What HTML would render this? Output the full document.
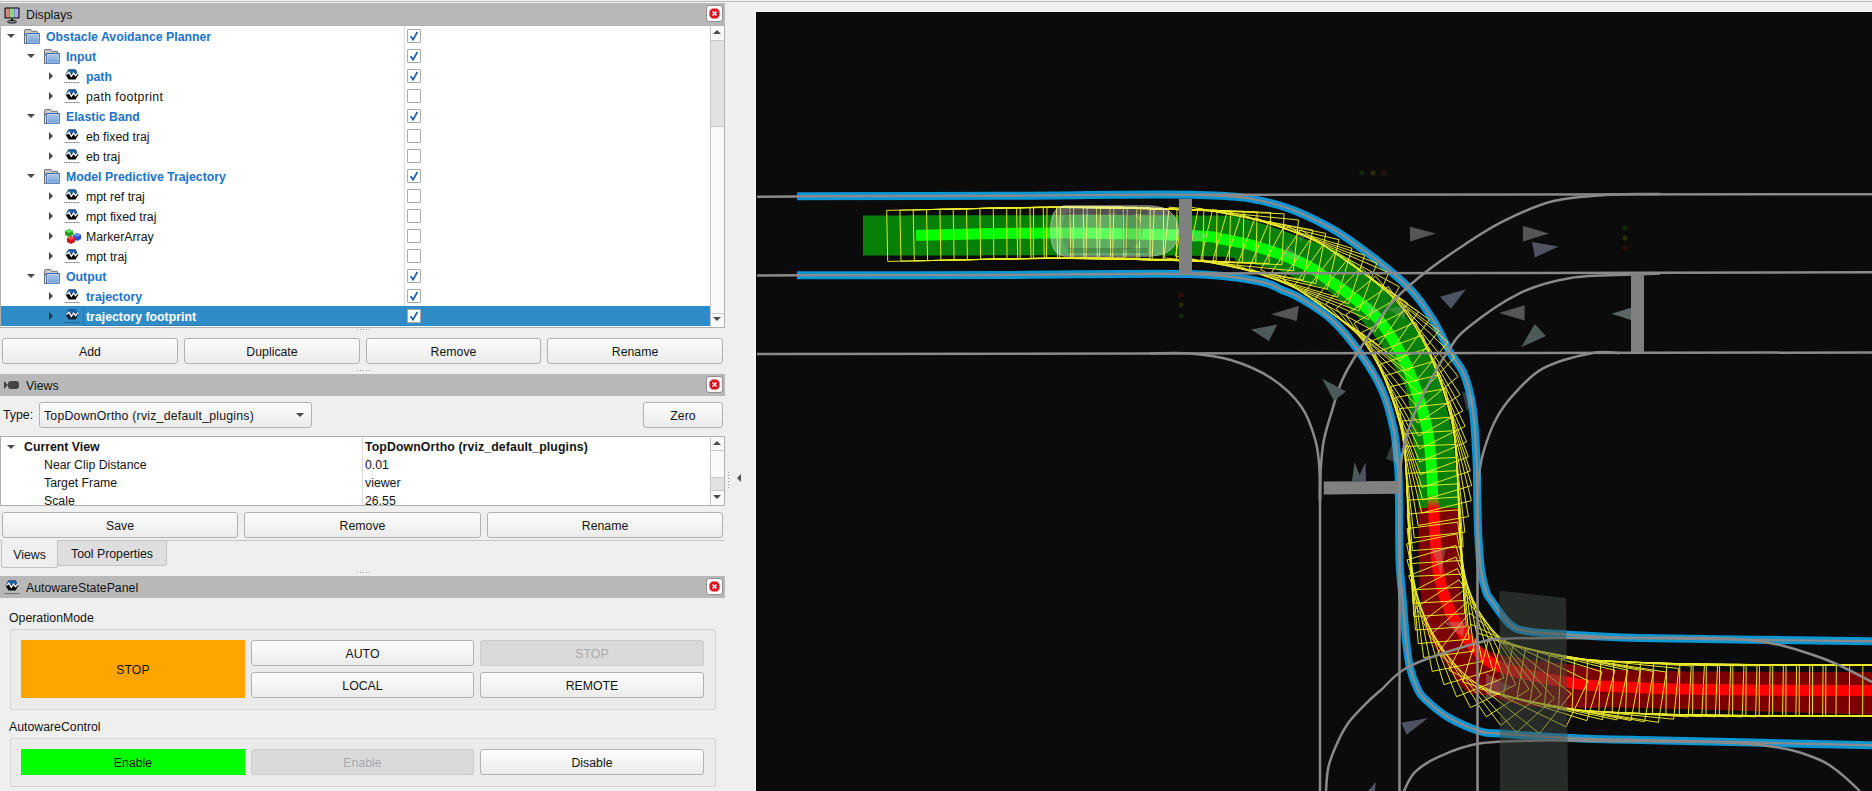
<!DOCTYPE html><html><head><meta charset="utf-8"><style>
*{box-sizing:border-box;margin:0;padding:0}
html,body{width:1872px;height:791px;overflow:hidden;background:#efefef;font-family:"Liberation Sans",sans-serif;font-size:12.3px;color:#141414}
.a{position:absolute;white-space:nowrap;padding-top:1px}
.bar{position:absolute;left:0;width:725px;background:#b8b8b8}
.close{position:absolute;width:17px;height:17px;border:1px solid #909090;border-radius:3px;background:#fbfbfb}
.btn{position:absolute;height:26px;border:1px solid #b2b2b2;border-radius:3px;background:linear-gradient(#fdfdfd,#ebebeb);text-align:center;line-height:24px;color:#141414;white-space:nowrap;padding-top:1px}
.btn.dis{background:#dadada;border-color:#cbcbcb;color:#a9a9a9}
.tree{position:absolute;background:#fff;border:1px solid #b0b0b0}
.row{position:absolute;left:0;width:725px;height:20px;line-height:20px;white-space:nowrap}
.blue{color:#2173c9;font-weight:bold}
.td{position:absolute;width:0;height:0;border-left:4px solid transparent;border-right:4px solid transparent;border-top:4px solid #4a4a4a}
.tr{position:absolute;width:0;height:0;border-top:4px solid transparent;border-bottom:4px solid transparent;border-left:4.5px solid #4a4a4a}
.cb{position:absolute;width:14px;height:14px;border:1px solid #a8a8a8;border-radius:1px;background:#fff}
svg{position:absolute;overflow:visible}
</style></head><body>
<svg width="0" height="0" style="left:0;top:0"><defs><linearGradient id="fgrad" x1="0" y1="0" x2="0" y2="1"><stop offset="0" stop-color="#a2c2e4"/><stop offset="0.5" stop-color="#96b8df"/><stop offset="1" stop-color="#6f9fd6"/></linearGradient></defs></svg>
<div class="a" style="left:0;top:1px;width:1872px;height:1px;background:#bcbcbc"></div>
<div class="bar" style="top:3px;height:23px"></div>
<svg width="18" height="18" style="left:4px;top:7px"><rect x="0.5" y="0.5" width="15" height="11" rx="1" fill="#000"/><rect x="1.5" y="1.5" width="4.3" height="9" fill="#d98080"/><rect x="5.8" y="1.5" width="4.4" height="9" fill="#8ad68a"/><rect x="10.2" y="1.5" width="4.3" height="9" fill="#a8a8f0"/><rect x="7" y="12" width="2" height="2" fill="#000"/><ellipse cx="8" cy="14.8" rx="4.5" ry="1.2" fill="none" stroke="#000" stroke-width="1"/></svg>
<div class="a" style="left:26px;top:3px;line-height:23px">Displays</div>
<div class="close" style="left:706px;top:5px"><svg width="17" height="17" style="left:-1px;top:-1px"><polygon points="6,3.5 11,3.5 13.5,6 13.5,11 11,13.5 6,13.5 3.5,11 3.5,6" fill="#d7141c"/><path d="M6.5 6.5L10.5 10.5M10.5 6.5L6.5 10.5" stroke="#fff" stroke-width="1.4"/></svg></div>
<div class="tree" style="left:0;top:25px;width:725px;height:303px"></div>
<div class="a" style="left:404px;top:26px;width:1px;height:301px;background:#dcdcdc"></div>
<div class="td" style="left:7px;top:34px"></div>
<svg width="17" height="16" style="left:24px;top:29px"><path d="M0.5 14.5V1.5Q0.5 0.5 1.5 0.5H6.5L8 2.3H12.8Q13.5 2.3 13.5 3V6H0.5Z" fill="#c8c8c8" stroke="#6e6e6e" stroke-width="1"/><path d="M0.5 6V14.5H2" fill="none" stroke="#6e6e6e"/><rect x="1.8" y="3.9" width="14" height="10.8" rx="0.6" fill="#2d60a8"/><rect x="2.8" y="4.9" width="12" height="8.8" fill="#c6daf0"/><rect x="3.6" y="5.7" width="10.4" height="7.2" fill="url(#fgrad)"/></svg>
<div class="a blue" style="left:46px;top:26px;line-height:21px;">Obstacle Avoidance Planner</div>
<div class="cb" style="left:407px;top:29px"><svg width="14" height="14" style="left:-1px;top:-1px"><path d="M3.6 7.2L6 10.6L10.4 3" fill="none" stroke="#1f5ea8" stroke-width="1.7"/></svg></div>
<div class="td" style="left:27px;top:54px"></div>
<svg width="17" height="16" style="left:44px;top:49px"><path d="M0.5 14.5V1.5Q0.5 0.5 1.5 0.5H6.5L8 2.3H12.8Q13.5 2.3 13.5 3V6H0.5Z" fill="#c8c8c8" stroke="#6e6e6e" stroke-width="1"/><path d="M0.5 6V14.5H2" fill="none" stroke="#6e6e6e"/><rect x="1.8" y="3.9" width="14" height="10.8" rx="0.6" fill="#2d60a8"/><rect x="2.8" y="4.9" width="12" height="8.8" fill="#c6daf0"/><rect x="3.6" y="5.7" width="10.4" height="7.2" fill="url(#fgrad)"/></svg>
<div class="a blue" style="left:66px;top:46px;line-height:21px;">Input</div>
<div class="cb" style="left:407px;top:49px"><svg width="14" height="14" style="left:-1px;top:-1px"><path d="M3.6 7.2L6 10.6L10.4 3" fill="none" stroke="#1f5ea8" stroke-width="1.7"/></svg></div>
<div class="tr" style="left:49px;top:72px;border-left-color:#4a4a4a"></div>
<svg width="17" height="16" style="left:64px;top:69px"><polygon points="4.5,0.5 11.5,0.5 14.5,5.5 11.5,10.5 4.5,10.5 1.5,5.5" fill="#000"/><polygon points="4.5,0.5 11.5,0.5 14,4.6 2,4.6" fill="#1d5fa6"/><path d="M2.3 5.6L5 3.3L7.3 7.2L9.6 4L11.6 6.6L14 3.6" fill="none" stroke="#fff" stroke-width="1.3"/><path d="M0.5 14L1.5 12.6M2 13.6H15.5" stroke="#000" stroke-width="0.8" stroke-dasharray="1 0.6" opacity="0.8"/></svg>
<div class="a blue" style="left:86px;top:66px;line-height:21px;">path</div>
<div class="cb" style="left:407px;top:69px"><svg width="14" height="14" style="left:-1px;top:-1px"><path d="M3.6 7.2L6 10.6L10.4 3" fill="none" stroke="#1f5ea8" stroke-width="1.7"/></svg></div>
<div class="tr" style="left:49px;top:92px;border-left-color:#4a4a4a"></div>
<svg width="17" height="16" style="left:64px;top:89px"><polygon points="4.5,0.5 11.5,0.5 14.5,5.5 11.5,10.5 4.5,10.5 1.5,5.5" fill="#000"/><polygon points="4.5,0.5 11.5,0.5 14,4.6 2,4.6" fill="#1d5fa6"/><path d="M2.3 5.6L5 3.3L7.3 7.2L9.6 4L11.6 6.6L14 3.6" fill="none" stroke="#fff" stroke-width="1.3"/><path d="M0.5 14L1.5 12.6M2 13.6H15.5" stroke="#000" stroke-width="0.8" stroke-dasharray="1 0.6" opacity="0.8"/></svg>
<div class="a " style="left:86px;top:86px;line-height:21px;letter-spacing:0.4px;">path footprint</div>
<div class="cb" style="left:407px;top:89px"></div>
<div class="td" style="left:27px;top:114px"></div>
<svg width="17" height="16" style="left:44px;top:109px"><path d="M0.5 14.5V1.5Q0.5 0.5 1.5 0.5H6.5L8 2.3H12.8Q13.5 2.3 13.5 3V6H0.5Z" fill="#c8c8c8" stroke="#6e6e6e" stroke-width="1"/><path d="M0.5 6V14.5H2" fill="none" stroke="#6e6e6e"/><rect x="1.8" y="3.9" width="14" height="10.8" rx="0.6" fill="#2d60a8"/><rect x="2.8" y="4.9" width="12" height="8.8" fill="#c6daf0"/><rect x="3.6" y="5.7" width="10.4" height="7.2" fill="url(#fgrad)"/></svg>
<div class="a blue" style="left:66px;top:106px;line-height:21px;">Elastic Band</div>
<div class="cb" style="left:407px;top:109px"><svg width="14" height="14" style="left:-1px;top:-1px"><path d="M3.6 7.2L6 10.6L10.4 3" fill="none" stroke="#1f5ea8" stroke-width="1.7"/></svg></div>
<div class="tr" style="left:49px;top:132px;border-left-color:#4a4a4a"></div>
<svg width="17" height="16" style="left:64px;top:129px"><polygon points="4.5,0.5 11.5,0.5 14.5,5.5 11.5,10.5 4.5,10.5 1.5,5.5" fill="#000"/><polygon points="4.5,0.5 11.5,0.5 14,4.6 2,4.6" fill="#1d5fa6"/><path d="M2.3 5.6L5 3.3L7.3 7.2L9.6 4L11.6 6.6L14 3.6" fill="none" stroke="#fff" stroke-width="1.3"/><path d="M0.5 14L1.5 12.6M2 13.6H15.5" stroke="#000" stroke-width="0.8" stroke-dasharray="1 0.6" opacity="0.8"/></svg>
<div class="a " style="left:86px;top:126px;line-height:21px;">eb fixed traj</div>
<div class="cb" style="left:407px;top:129px"></div>
<div class="tr" style="left:49px;top:152px;border-left-color:#4a4a4a"></div>
<svg width="17" height="16" style="left:64px;top:149px"><polygon points="4.5,0.5 11.5,0.5 14.5,5.5 11.5,10.5 4.5,10.5 1.5,5.5" fill="#000"/><polygon points="4.5,0.5 11.5,0.5 14,4.6 2,4.6" fill="#1d5fa6"/><path d="M2.3 5.6L5 3.3L7.3 7.2L9.6 4L11.6 6.6L14 3.6" fill="none" stroke="#fff" stroke-width="1.3"/><path d="M0.5 14L1.5 12.6M2 13.6H15.5" stroke="#000" stroke-width="0.8" stroke-dasharray="1 0.6" opacity="0.8"/></svg>
<div class="a " style="left:86px;top:146px;line-height:21px;">eb traj</div>
<div class="cb" style="left:407px;top:149px"></div>
<div class="td" style="left:27px;top:174px"></div>
<svg width="17" height="16" style="left:44px;top:169px"><path d="M0.5 14.5V1.5Q0.5 0.5 1.5 0.5H6.5L8 2.3H12.8Q13.5 2.3 13.5 3V6H0.5Z" fill="#c8c8c8" stroke="#6e6e6e" stroke-width="1"/><path d="M0.5 6V14.5H2" fill="none" stroke="#6e6e6e"/><rect x="1.8" y="3.9" width="14" height="10.8" rx="0.6" fill="#2d60a8"/><rect x="2.8" y="4.9" width="12" height="8.8" fill="#c6daf0"/><rect x="3.6" y="5.7" width="10.4" height="7.2" fill="url(#fgrad)"/></svg>
<div class="a blue" style="left:66px;top:166px;line-height:21px;">Model Predictive Trajectory</div>
<div class="cb" style="left:407px;top:169px"><svg width="14" height="14" style="left:-1px;top:-1px"><path d="M3.6 7.2L6 10.6L10.4 3" fill="none" stroke="#1f5ea8" stroke-width="1.7"/></svg></div>
<div class="tr" style="left:49px;top:192px;border-left-color:#4a4a4a"></div>
<svg width="17" height="16" style="left:64px;top:189px"><polygon points="4.5,0.5 11.5,0.5 14.5,5.5 11.5,10.5 4.5,10.5 1.5,5.5" fill="#000"/><polygon points="4.5,0.5 11.5,0.5 14,4.6 2,4.6" fill="#1d5fa6"/><path d="M2.3 5.6L5 3.3L7.3 7.2L9.6 4L11.6 6.6L14 3.6" fill="none" stroke="#fff" stroke-width="1.3"/><path d="M0.5 14L1.5 12.6M2 13.6H15.5" stroke="#000" stroke-width="0.8" stroke-dasharray="1 0.6" opacity="0.8"/></svg>
<div class="a " style="left:86px;top:186px;line-height:21px;">mpt ref traj</div>
<div class="cb" style="left:407px;top:189px"></div>
<div class="tr" style="left:49px;top:212px;border-left-color:#4a4a4a"></div>
<svg width="17" height="16" style="left:64px;top:209px"><polygon points="4.5,0.5 11.5,0.5 14.5,5.5 11.5,10.5 4.5,10.5 1.5,5.5" fill="#000"/><polygon points="4.5,0.5 11.5,0.5 14,4.6 2,4.6" fill="#1d5fa6"/><path d="M2.3 5.6L5 3.3L7.3 7.2L9.6 4L11.6 6.6L14 3.6" fill="none" stroke="#fff" stroke-width="1.3"/><path d="M0.5 14L1.5 12.6M2 13.6H15.5" stroke="#000" stroke-width="0.8" stroke-dasharray="1 0.6" opacity="0.8"/></svg>
<div class="a " style="left:86px;top:206px;line-height:21px;">mpt fixed traj</div>
<div class="cb" style="left:407px;top:209px"></div>
<div class="tr" style="left:49px;top:232px;border-left-color:#4a4a4a"></div>
<svg width="17" height="17" style="left:64px;top:228px"><polygon points="1,3 5,1 9,3 9,7 5,9 1,7" fill="#1fa01f"/><polygon points="1,3 5,1 9,3 5,5" fill="#5fe05f"/><polygon points="9,7 13,5 17,7 17,11 13,13 9,11" fill="#2848d8"/><polygon points="9,7 13,5 17,7 13,9" fill="#6a8af0"/><polygon points="3,10 7,8 11,10 11,14 7,16 3,14" fill="#c81818"/><polygon points="3,10 7,8 11,10 7,12" fill="#f05050"/></svg>
<div class="a " style="left:86px;top:226px;line-height:21px;">MarkerArray</div>
<div class="cb" style="left:407px;top:229px"></div>
<div class="tr" style="left:49px;top:252px;border-left-color:#4a4a4a"></div>
<svg width="17" height="16" style="left:64px;top:249px"><polygon points="4.5,0.5 11.5,0.5 14.5,5.5 11.5,10.5 4.5,10.5 1.5,5.5" fill="#000"/><polygon points="4.5,0.5 11.5,0.5 14,4.6 2,4.6" fill="#1d5fa6"/><path d="M2.3 5.6L5 3.3L7.3 7.2L9.6 4L11.6 6.6L14 3.6" fill="none" stroke="#fff" stroke-width="1.3"/><path d="M0.5 14L1.5 12.6M2 13.6H15.5" stroke="#000" stroke-width="0.8" stroke-dasharray="1 0.6" opacity="0.8"/></svg>
<div class="a " style="left:86px;top:246px;line-height:21px;">mpt traj</div>
<div class="cb" style="left:407px;top:249px"></div>
<div class="td" style="left:27px;top:274px"></div>
<svg width="17" height="16" style="left:44px;top:269px"><path d="M0.5 14.5V1.5Q0.5 0.5 1.5 0.5H6.5L8 2.3H12.8Q13.5 2.3 13.5 3V6H0.5Z" fill="#c8c8c8" stroke="#6e6e6e" stroke-width="1"/><path d="M0.5 6V14.5H2" fill="none" stroke="#6e6e6e"/><rect x="1.8" y="3.9" width="14" height="10.8" rx="0.6" fill="#2d60a8"/><rect x="2.8" y="4.9" width="12" height="8.8" fill="#c6daf0"/><rect x="3.6" y="5.7" width="10.4" height="7.2" fill="url(#fgrad)"/></svg>
<div class="a blue" style="left:66px;top:266px;line-height:21px;">Output</div>
<div class="cb" style="left:407px;top:269px"><svg width="14" height="14" style="left:-1px;top:-1px"><path d="M3.6 7.2L6 10.6L10.4 3" fill="none" stroke="#1f5ea8" stroke-width="1.7"/></svg></div>
<div class="tr" style="left:49px;top:292px;border-left-color:#4a4a4a"></div>
<svg width="17" height="16" style="left:64px;top:289px"><polygon points="4.5,0.5 11.5,0.5 14.5,5.5 11.5,10.5 4.5,10.5 1.5,5.5" fill="#000"/><polygon points="4.5,0.5 11.5,0.5 14,4.6 2,4.6" fill="#1d5fa6"/><path d="M2.3 5.6L5 3.3L7.3 7.2L9.6 4L11.6 6.6L14 3.6" fill="none" stroke="#fff" stroke-width="1.3"/><path d="M0.5 14L1.5 12.6M2 13.6H15.5" stroke="#000" stroke-width="0.8" stroke-dasharray="1 0.6" opacity="0.8"/></svg>
<div class="a blue" style="left:86px;top:286px;line-height:21px;">trajectory</div>
<div class="cb" style="left:407px;top:289px"><svg width="14" height="14" style="left:-1px;top:-1px"><path d="M3.6 7.2L6 10.6L10.4 3" fill="none" stroke="#1f5ea8" stroke-width="1.7"/></svg></div>
<div class="a" style="left:1px;top:306px;width:709px;height:20px;background:#308cc6"></div>
<div class="a" style="left:83px;top:306px;width:1px;height:20px;background:#2674a8"></div>
<div class="a" style="left:83px;top:325px;width:321px;height:1px;background:#2a80b8"></div>
<div class="tr" style="left:49px;top:312px;border-left-color:#1a3550"></div>
<svg width="17" height="16" style="left:64px;top:309px"><polygon points="4.5,0.5 11.5,0.5 14.5,5.5 11.5,10.5 4.5,10.5 1.5,5.5" fill="#0d2238"/><polygon points="4.5,0.5 11.5,0.5 14,4.6 2,4.6" fill="#1d5fa6"/><path d="M2.3 5.6L5 3.3L7.3 7.2L9.6 4L11.6 6.6L14 3.6" fill="none" stroke="#fff" stroke-width="1.3"/><path d="M0.5 14L1.5 12.6M2 13.6H15.5" stroke="#0d2238" stroke-width="0.8" stroke-dasharray="1 0.6" opacity="0.8"/></svg>
<div class="a blue" style="left:86px;top:306px;line-height:21px;color:#fff;">trajectory footprint</div>
<div class="cb" style="left:407px;top:309px"><svg width="14" height="14" style="left:-1px;top:-1px"><path d="M3.6 7.2L6 10.6L10.4 3" fill="none" stroke="#1f5ea8" stroke-width="1.7"/></svg></div>
<div class="a" style="left:710px;top:26px;width:14px;height:301px;background:#fafafa;border-left:1px solid #c8c8c8"></div>
<div class="a" style="left:711px;top:40px;width:13px;height:87px;background:#e2e2e2;border-top:1px solid #c8c8c8;border-bottom:1px solid #c8c8c8"></div>
<div class="a" style="left:711px;top:313px;width:13px;height:1px;background:#c8c8c8"></div>
<div class="td" style="left:713px;top:30px;border-top:none;border-bottom:4px solid #4a4a4a"></div>
<div class="td" style="left:713px;top:317px"></div>
<div class="btn" style="left:2px;top:338px;width:176px">Add</div>
<div class="btn" style="left:184px;top:338px;width:176px">Duplicate</div>
<div class="btn" style="left:366px;top:338px;width:175px">Remove</div>
<div class="btn" style="left:547px;top:338px;width:176px">Rename</div>
<div class="bar" style="top:374px;height:22px"></div>
<svg width="18" height="12" style="left:4px;top:380px"><polygon points="0,1 4,5 0,9" fill="#444"/><rect x="4" y="1" width="11" height="8" rx="3" fill="#444"/></svg>
<div class="a" style="left:26px;top:374px;line-height:22px">Views</div>
<div class="close" style="left:706px;top:376px"><svg width="17" height="17" style="left:-1px;top:-1px"><polygon points="6,3.5 11,3.5 13.5,6 13.5,11 11,13.5 6,13.5 3.5,11 3.5,6" fill="#d7141c"/><path d="M6.5 6.5L10.5 10.5M10.5 6.5L6.5 10.5" stroke="#fff" stroke-width="1.4"/></svg></div>
<div class="a" style="left:3px;top:402px;line-height:25px">Type:</div>
<div class="btn" style="left:39px;top:402px;width:273px;height:26px;text-align:left;padding-left:4px;letter-spacing:0.22px">TopDownOrtho (rviz_default_plugins)</div>
<div class="td" style="left:296px;top:413px"></div>
<div class="btn" style="left:643px;top:402px;width:80px">Zero</div>
<div class="tree" style="left:0;top:436px;width:725px;height:70px"></div>
<div class="a" style="left:362px;top:437px;width:1px;height:68px;background:#dcdcdc"></div>
<div class="td" style="left:7px;top:445px"></div>
<div class="a" style="left:24px;top:437px;line-height:19px;font-weight:bold">Current View</div>
<div class="a" style="left:365px;top:437px;line-height:19px;font-weight:bold;letter-spacing:0.11px">TopDownOrtho (rviz_default_plugins)</div>
<div class="a" style="left:44px;top:455px;line-height:19px">Near Clip Distance</div>
<div class="a" style="left:365px;top:455px;line-height:19px">0.01</div>
<div class="a" style="left:44px;top:473px;line-height:19px">Target Frame</div>
<div class="a" style="left:365px;top:473px;line-height:19px">viewer</div>
<div class="a" style="left:44px;top:491px;line-height:19px">Scale</div>
<div class="a" style="left:365px;top:491px;line-height:19px">26.55</div>
<div class="a" style="left:1px;top:505px;width:723px;height:1px;background:#b0b0b0"></div>
<div class="a" style="left:710px;top:437px;width:14px;height:68px;background:#fafafa;border-left:1px solid #c8c8c8"></div>
<div class="a" style="left:711px;top:450px;width:13px;height:1px;background:#c8c8c8"></div>
<div class="a" style="left:711px;top:477px;width:13px;height:14px;background:#e2e2e2;border-top:1px solid #c8c8c8;border-bottom:1px solid #c8c8c8"></div>
<div class="td" style="left:713px;top:441px;border-top:none;border-bottom:4px solid #4a4a4a"></div>
<div class="td" style="left:713px;top:495px"></div>
<div class="btn" style="left:2px;top:512px;width:236px">Save</div>
<div class="btn" style="left:244px;top:512px;width:237px">Remove</div>
<div class="btn" style="left:487px;top:512px;width:236px">Rename</div>
<div class="a" style="left:0;top:540px;width:725px;height:1px;background:#c4c4c4"></div>
<div class="a" style="left:57px;top:541px;width:110px;height:25px;background:#dedede;border:1px solid #c2c2c2;border-top:none;border-radius:0 0 3px 3px;line-height:24px;text-align:center">Tool Properties</div>
<div class="a" style="left:1px;top:540px;width:57px;height:28px;background:#efefef;border:1px solid #c2c2c2;border-top:none;border-radius:0 0 3px 3px;line-height:29px;text-align:center">Views</div>
<div class="bar" style="top:576px;height:22px"></div>
<svg width="17" height="16" style="left:4px;top:580px"><polygon points="4.5,0.5 11.5,0.5 14.5,5.5 11.5,10.5 4.5,10.5 1.5,5.5" fill="#000"/><polygon points="4.5,0.5 11.5,0.5 14,4.6 2,4.6" fill="#1d5fa6"/><path d="M2.3 5.6L5 3.3L7.3 7.2L9.6 4L11.6 6.6L14 3.6" fill="none" stroke="#fff" stroke-width="1.3"/><path d="M0.5 14L1.5 12.6M2 13.6H15.5" stroke="#000" stroke-width="0.8" stroke-dasharray="1 0.6" opacity="0.8"/></svg>
<div class="a" style="left:26px;top:576px;line-height:22px">AutowareStatePanel</div>
<div class="close" style="left:706px;top:578px"><svg width="17" height="17" style="left:-1px;top:-1px"><polygon points="6,3.5 11,3.5 13.5,6 13.5,11 11,13.5 6,13.5 3.5,11 3.5,6" fill="#d7141c"/><path d="M6.5 6.5L10.5 10.5M10.5 6.5L6.5 10.5" stroke="#fff" stroke-width="1.4"/></svg></div>
<div class="a" style="left:9px;top:607px;line-height:20px">OperationMode</div>
<div class="a" style="left:10px;top:629px;width:706px;height:81px;border:1px solid #d4d4d4;border-radius:2px;background:#ebebeb"></div>
<div class="a" style="left:21px;top:640px;width:224px;height:58px;background:#ffa500;line-height:58px;text-align:center">STOP</div>
<div class="btn" style="left:251px;top:640px;width:223px">AUTO</div>
<div class="btn dis" style="left:480px;top:640px;width:224px">STOP</div>
<div class="btn" style="left:251px;top:672px;width:223px">LOCAL</div>
<div class="btn" style="left:480px;top:672px;width:224px">REMOTE</div>
<div class="a" style="left:9px;top:716px;line-height:20px">AutowareControl</div>
<div class="a" style="left:10px;top:738px;width:706px;height:49px;border:1px solid #d4d4d4;border-radius:2px;background:#ebebeb"></div>
<div class="a" style="left:21px;top:749px;width:224px;height:26px;background:#00ff00;line-height:26px;text-align:center">Enable</div>
<div class="btn dis" style="left:251px;top:749px;width:223px">Enable</div>
<div class="btn" style="left:480px;top:749px;width:224px">Disable</div>
<div class="a" style="left:357px;top:329px;width:15px;height:1px;background:repeating-linear-gradient(90deg,#a0a0a0 0 1px,transparent 1px 3px)"></div>
<div class="a" style="left:357px;top:370px;width:15px;height:1px;background:repeating-linear-gradient(90deg,#a0a0a0 0 1px,transparent 1px 3px)"></div>
<div class="a" style="left:357px;top:572px;width:15px;height:1px;background:repeating-linear-gradient(90deg,#a0a0a0 0 1px,transparent 1px 3px)"></div>
<div class="a" style="left:728px;top:472px;width:1px;height:16px;background:repeating-linear-gradient(180deg,#a0a0a0 0 1px,transparent 1px 3px)"></div>
<svg width="6" height="10" style="left:736px;top:473px"><polygon points="5,1 1,5 5,9" fill="#505050"/></svg>
<div class="a" style="left:755px;top:11px;width:1117px;height:780px;background:#fff"></div>
<div class="a" style="left:756px;top:12px;width:1116px;height:779px;background:#000"></div>
<div class="a" style="left:757px;top:13px;width:1115px;height:778px;background:#0b0b0b;overflow:hidden">
<svg width="1115" height="778" viewBox="757 13 1115 778" style="left:0;top:0">
<defs><linearGradient id="gr" gradientUnits="userSpaceOnUse" x1="0" y1="500" x2="0" y2="508"><stop offset="0" stop-color="#068006"/><stop offset="0.99" stop-color="#068006"/><stop offset="1" stop-color="#7d0000"/></linearGradient><linearGradient id="gb" gradientUnits="userSpaceOnUse" x1="0" y1="494" x2="0" y2="508"><stop offset="0" stop-color="#00ff00"/><stop offset="1" stop-color="#ff0000"/></linearGradient></defs>
<path d="M797.0 196.2 C830.8 196.1 932.8 196.0 1000.0 195.8 C1067.2 195.6 1154.5 193.7 1200.0 195.0 C1245.5 196.3 1251.5 198.3 1273.0 203.6 C1294.5 208.9 1312.2 217.9 1329.0 227.0 C1345.8 236.1 1360.3 247.5 1374.0 258.0 C1387.7 268.5 1401.2 279.7 1411.0 290.0 C1420.8 300.3 1426.4 309.5 1433.0 320.0 C1439.6 330.5 1445.5 344.3 1450.5 353.0 C1455.5 361.7 1459.7 364.8 1463.0 372.0 C1466.3 379.2 1468.7 388.0 1470.5 396.0 C1472.3 404.0 1473.1 411.0 1474.0 420.0 C1474.9 429.0 1475.5 440.8 1476.0 450.0 C1476.5 459.2 1476.8 465.0 1477.0 475.0 C1477.2 485.0 1477.2 499.2 1477.5 510.0 C1477.8 520.8 1477.9 530.0 1478.5 540.0 C1479.1 550.0 1479.8 561.4 1481.0 570.0 C1482.2 578.6 1484.3 586.5 1486.0 591.5 C1487.7 596.5 1487.0 594.5 1491.0 600.0 C1495.0 605.5 1503.8 619.2 1510.0 624.4 C1516.2 629.6 1518.7 629.7 1528.0 631.4 C1537.3 633.1 1547.3 633.3 1566.0 634.4 C1584.7 635.5 1589.0 636.9 1640.0 638.0 C1691.0 639.1 1833.3 640.8 1872.0 641.3" fill="none" stroke="#0796d6" stroke-width="8"/>
<path d="M797.0 196.2 C830.8 196.1 932.8 196.0 1000.0 195.8 C1067.2 195.6 1154.5 193.7 1200.0 195.0 C1245.5 196.3 1251.5 198.3 1273.0 203.6 C1294.5 208.9 1312.2 217.9 1329.0 227.0 C1345.8 236.1 1360.3 247.5 1374.0 258.0 C1387.7 268.5 1401.2 279.7 1411.0 290.0 C1420.8 300.3 1426.4 309.5 1433.0 320.0 C1439.6 330.5 1445.5 344.3 1450.5 353.0 C1455.5 361.7 1459.7 364.8 1463.0 372.0 C1466.3 379.2 1468.7 388.0 1470.5 396.0 C1472.3 404.0 1473.1 411.0 1474.0 420.0 C1474.9 429.0 1475.5 440.8 1476.0 450.0 C1476.5 459.2 1476.8 465.0 1477.0 475.0 C1477.2 485.0 1477.2 499.2 1477.5 510.0 C1477.8 520.8 1477.9 530.0 1478.5 540.0 C1479.1 550.0 1479.8 561.4 1481.0 570.0 C1482.2 578.6 1484.3 586.5 1486.0 591.5 C1487.7 596.5 1487.0 594.5 1491.0 600.0 C1495.0 605.5 1503.8 619.2 1510.0 624.4 C1516.2 629.6 1518.7 629.7 1528.0 631.4 C1537.3 633.1 1547.3 633.3 1566.0 634.4 C1584.7 635.5 1589.0 636.9 1640.0 638.0 C1691.0 639.1 1833.3 640.8 1872.0 641.3" fill="none" stroke="#8a8a8a" stroke-width="2.4"/>
<path d="M797.0 275.2 C830.8 275.2 934.5 275.2 1000.0 275.0 C1065.5 274.8 1146.8 272.9 1190.0 274.0 C1233.2 275.1 1244.2 278.8 1259.5 281.5 C1274.8 284.2 1275.2 287.2 1282.0 290.0 C1288.8 292.8 1291.7 293.0 1300.0 298.0 C1308.3 303.0 1322.0 310.8 1332.0 320.0 C1342.0 329.2 1351.7 341.3 1360.0 353.0 C1368.3 364.7 1376.4 377.2 1382.0 390.0 C1387.6 402.8 1391.1 416.7 1393.8 430.0 C1396.5 443.3 1397.4 458.3 1398.3 470.0 C1399.2 481.7 1398.8 485.0 1399.0 500.0 C1399.2 515.0 1398.9 543.3 1399.5 560.0 C1400.1 576.7 1401.6 586.7 1402.7 600.0 C1403.8 613.3 1404.8 628.7 1406.0 640.0 C1407.2 651.3 1408.0 659.7 1410.0 668.0 C1412.0 676.3 1415.5 684.8 1418.0 690.0 C1420.5 695.2 1420.1 694.5 1425.0 699.0 C1429.9 703.5 1438.3 711.5 1447.3 716.8 C1456.3 722.1 1470.2 728.2 1479.0 731.0 C1487.8 733.8 1483.2 732.2 1500.0 733.5 C1516.8 734.8 1556.7 737.4 1580.0 738.5 C1603.3 739.6 1591.3 738.9 1640.0 740.0 C1688.7 741.1 1833.3 744.4 1872.0 745.3" fill="none" stroke="#0796d6" stroke-width="8"/>
<path d="M797.0 275.2 C830.8 275.2 934.5 275.2 1000.0 275.0 C1065.5 274.8 1146.8 272.9 1190.0 274.0 C1233.2 275.1 1244.2 278.8 1259.5 281.5 C1274.8 284.2 1275.2 287.2 1282.0 290.0 C1288.8 292.8 1291.7 293.0 1300.0 298.0 C1308.3 303.0 1322.0 310.8 1332.0 320.0 C1342.0 329.2 1351.7 341.3 1360.0 353.0 C1368.3 364.7 1376.4 377.2 1382.0 390.0 C1387.6 402.8 1391.1 416.7 1393.8 430.0 C1396.5 443.3 1397.4 458.3 1398.3 470.0 C1399.2 481.7 1398.8 485.0 1399.0 500.0 C1399.2 515.0 1398.9 543.3 1399.5 560.0 C1400.1 576.7 1401.6 586.7 1402.7 600.0 C1403.8 613.3 1404.8 628.7 1406.0 640.0 C1407.2 651.3 1408.0 659.7 1410.0 668.0 C1412.0 676.3 1415.5 684.8 1418.0 690.0 C1420.5 695.2 1420.1 694.5 1425.0 699.0 C1429.9 703.5 1438.3 711.5 1447.3 716.8 C1456.3 722.1 1470.2 728.2 1479.0 731.0 C1487.8 733.8 1483.2 732.2 1500.0 733.5 C1516.8 734.8 1556.7 737.4 1580.0 738.5 C1603.3 739.6 1591.3 738.9 1640.0 740.0 C1688.7 741.1 1833.3 744.4 1872.0 745.3" fill="none" stroke="#8a8a8a" stroke-width="2.4"/>
<path d="M863.0 215.4 L864.5 215.4 L866.2 215.4 L867.9 215.4 L869.7 215.4 L871.5 215.4 L873.4 215.4 L875.4 215.4 L877.5 215.4 L879.6 215.4 L881.8 215.4 L884.0 215.4 L886.4 215.4 L888.7 215.4 L891.2 215.4 L893.7 215.4 L896.3 215.4 L898.9 215.4 L901.5 215.4 L904.3 215.4 L907.0 215.4 L909.9 215.3 L912.7 215.3 L915.7 215.3 L918.6 215.3 L921.6 215.3 L924.7 215.3 L927.8 215.3 L930.9 215.3 L934.1 215.3 L937.3 215.3 L940.6 215.3 L943.9 215.3 L947.2 215.3 L950.6 215.3 L954.0 215.3 L957.4 215.3 L960.8 215.3 L964.3 215.3 L967.8 215.3 L971.3 215.2 L974.9 215.2 L978.4 215.2 L982.0 215.2 L985.6 215.2 L989.2 215.2 L992.9 215.2 L996.5 215.2 L1000.2 215.2 L1003.8 215.2 L1007.5 215.2 L1011.2 215.2 L1014.9 215.2 L1018.6 215.2 L1022.3 215.2 L1026.0 215.2 L1029.8 215.2 L1033.5 215.2 L1037.2 215.2 L1040.9 215.2 L1044.6 215.2 L1048.3 215.2 L1052.0 215.1 L1055.7 215.1 L1059.4 215.1 L1063.0 215.1 L1066.7 215.1 L1070.3 215.1 L1073.9 215.1 L1077.5 215.1 L1081.1 215.1 L1084.7 215.1 L1088.2 215.1 L1091.8 215.1 L1095.3 215.1 L1098.7 215.1 L1102.2 215.1 L1105.6 215.1 L1109.0 215.1 L1112.4 215.1 L1115.7 215.1 L1119.0 215.1 L1122.3 215.1 L1125.5 215.2 L1128.7 215.2 L1131.8 215.2 L1134.9 215.2 L1138.0 215.2 L1141.0 215.2 L1144.0 215.2 L1146.9 215.2 L1149.8 215.2 L1152.6 215.2 L1155.4 215.2 L1158.2 215.2 L1160.8 215.2 L1163.5 215.2 L1166.0 215.2 L1168.5 215.3 L1171.0 215.3 L1173.4 215.3 L1175.7 215.3 L1178.0 215.3 L1180.2 215.3 L1182.3 215.3 L1184.4 215.3 L1186.4 215.4 L1188.3 215.4 L1190.2 215.4 L1192.0 215.4 L1202.3 215.5 L1210.8 215.6 L1217.8 215.6 L1223.3 215.7 L1227.6 215.7 L1230.8 215.7 L1233.1 215.8 L1234.7 215.9 L1235.7 216.0 L1236.4 216.2 L1236.9 216.4 L1237.3 216.6 L1237.9 216.9 L1238.7 217.3 L1240.1 217.8 L1242.1 218.4 L1245.0 219.0 L1247.7 219.6 L1250.6 220.3 L1253.5 221.0 L1256.4 221.9 L1259.5 222.8 L1262.5 223.7 L1265.6 224.7 L1268.7 225.7 L1271.8 226.7 L1274.9 227.8 L1278.0 228.9 L1281.0 230.0 L1284.0 231.1 L1287.0 232.2 L1289.9 233.2 L1292.8 234.3 L1295.5 235.3 L1298.2 236.3 L1300.7 237.3 L1303.2 238.2 L1305.5 239.0 L1309.2 240.3 L1312.6 241.4 L1315.6 242.4 L1318.4 243.3 L1321.1 244.1 L1323.6 244.9 L1326.0 245.8 L1328.5 246.9 L1331.0 248.0 L1333.7 249.4 L1336.5 251.0 L1339.7 253.0 L1341.8 254.4 L1344.1 256.0 L1346.5 257.6 L1348.9 259.4 L1351.4 261.3 L1353.9 263.2 L1356.5 265.2 L1359.1 267.3 L1361.7 269.4 L1364.3 271.6 L1366.9 273.7 L1369.4 275.9 L1371.9 278.0 L1374.3 280.2 L1376.7 282.3 L1378.9 284.3 L1381.1 286.3 L1383.1 288.2 L1385.0 290.0 L1387.8 292.7 L1390.3 295.4 L1392.6 297.9 L1394.7 300.4 L1396.7 302.8 L1398.5 305.2 L1400.3 307.6 L1402.0 310.0 L1403.7 312.5 L1405.4 314.9 L1407.2 317.4 L1409.0 320.0 L1410.7 322.4 L1412.5 324.9 L1414.2 327.3 L1416.0 329.8 L1417.7 332.3 L1419.4 334.8 L1421.1 337.3 L1422.7 339.9 L1424.3 342.5 L1425.8 345.1 L1427.3 347.7 L1428.7 350.3 L1430.0 353.0 L1431.3 355.9 L1432.5 358.9 L1433.6 361.9 L1434.7 364.9 L1435.7 368.0 L1436.6 371.1 L1437.5 374.2 L1438.3 377.3 L1439.2 380.4 L1440.0 383.6 L1440.9 386.8 L1441.8 390.0 L1442.6 393.0 L1443.5 396.0 L1444.3 399.0 L1445.2 402.1 L1446.0 405.2 L1446.9 408.3 L1447.7 411.4 L1448.4 414.5 L1449.2 417.6 L1449.9 420.7 L1450.6 423.8 L1451.2 426.9 L1451.8 430.0 L1452.3 433.1 L1452.8 436.3 L1453.3 439.4 L1453.7 442.6 L1454.1 445.8 L1454.4 449.0 L1454.7 452.2 L1455.0 455.3 L1455.3 458.4 L1455.6 461.5 L1455.8 464.4 L1456.1 467.3 L1456.3 470.0 L1456.6 473.2 L1456.8 476.0 L1457.0 478.5 L1457.2 480.8 L1457.4 483.1 L1457.5 485.6 L1457.6 488.4 L1457.7 491.6 L1457.9 495.4 L1458.0 500.0 L1458.1 502.3 L1458.1 504.8 L1458.2 507.5 L1458.2 510.3 L1458.2 513.3 L1458.3 516.4 L1458.3 519.6 L1458.3 523.0 L1458.4 526.4 L1458.4 529.8 L1458.4 533.3 L1458.4 536.7 L1458.5 540.2 L1458.5 543.6 L1458.5 547.0 L1458.6 550.4 L1458.6 553.6 L1458.7 556.7 L1458.7 559.7 L1458.8 562.5 L1458.9 565.2 L1458.9 567.7 L1459.0 570.0 L1459.2 574.6 L1459.4 578.6 L1459.6 582.1 L1459.8 585.1 L1460.0 587.8 L1460.3 590.3 L1460.6 592.6 L1460.9 595.0 L1461.3 597.4 L1461.8 600.0 L1462.5 603.4 L1463.2 606.7 L1464.0 610.0 L1464.9 613.1 L1465.8 616.2 L1466.8 619.2 L1467.9 622.1 L1469.0 625.0 L1470.3 628.2 L1471.6 631.4 L1473.0 634.4 L1474.5 637.4 L1476.1 640.2 L1477.9 642.7 L1480.0 645.0 L1482.4 647.0 L1485.0 648.8 L1487.9 650.4 L1490.9 651.7 L1494.0 652.9 L1497.0 654.0 L1500.0 655.0 L1503.1 655.9 L1505.9 656.4 L1508.8 656.8 L1512.0 657.0 L1515.8 657.4 L1520.7 658.0 L1522.9 658.3 L1525.3 658.6 L1527.7 659.0 L1530.3 659.4 L1532.9 659.8 L1535.7 660.2 L1538.5 660.6 L1541.5 661.0 L1544.6 661.4 L1547.9 661.8 L1551.2 662.3 L1554.7 662.7 L1558.3 663.1 L1562.1 663.6 L1566.0 664.0 L1568.4 664.3 L1570.7 664.6 L1572.8 664.8 L1574.8 665.1 L1576.8 665.4 L1578.8 665.8 L1580.7 666.1 L1582.7 666.4 L1584.7 666.7 L1586.8 667.0 L1589.0 667.3 L1591.3 667.6 L1593.8 668.0 L1596.5 668.3 L1599.4 668.6 L1602.6 668.8 L1606.0 669.1 L1609.7 669.4 L1613.8 669.6 L1618.2 669.9 L1623.0 670.1 L1628.2 670.3 L1633.9 670.5 L1640.0 670.7 L1642.0 670.8 L1644.2 670.8 L1646.4 670.8 L1648.7 670.9 L1651.0 670.9 L1653.5 671.0 L1656.0 671.0 L1658.6 671.1 L1661.3 671.1 L1664.1 671.1 L1666.9 671.2 L1669.8 671.2 L1672.7 671.2 L1675.7 671.3 L1678.8 671.3 L1681.9 671.3 L1685.0 671.4 L1688.2 671.4 L1691.5 671.4 L1694.8 671.5 L1698.2 671.5 L1701.5 671.5 L1705.0 671.5 L1708.4 671.5 L1711.9 671.6 L1715.4 671.6 L1718.9 671.6 L1722.5 671.6 L1726.1 671.6 L1729.7 671.7 L1733.3 671.7 L1736.9 671.7 L1740.5 671.7 L1744.2 671.7 L1747.8 671.7 L1751.5 671.7 L1755.2 671.8 L1758.8 671.8 L1762.4 671.8 L1766.1 671.8 L1769.7 671.8 L1773.3 671.8 L1776.9 671.8 L1780.5 671.8 L1784.1 671.8 L1787.6 671.8 L1791.1 671.8 L1794.6 671.8 L1798.1 671.9 L1801.5 671.9 L1804.9 671.9 L1808.2 671.9 L1811.5 671.9 L1814.8 671.9 L1818.0 671.9 L1821.2 671.9 L1824.3 671.9 L1827.4 671.9 L1830.4 671.9 L1833.3 671.9 L1836.2 671.9 L1839.0 671.9 L1841.8 671.9 L1844.5 671.9 L1847.1 671.9 L1849.7 671.9 L1852.1 671.9 L1854.5 671.9 L1856.8 671.9 L1859.0 672.0 L1861.2 672.0 L1863.2 672.0 L1865.2 672.0 L1867.0 672.0 L1868.8 672.0 L1870.4 672.0 L1872.0 672.0 L1872.0 714.7 L1870.4 714.7 L1868.8 714.6 L1867.0 714.6 L1865.2 714.5 L1863.2 714.4 L1861.2 714.4 L1859.0 714.3 L1856.8 714.3 L1854.5 714.2 L1852.1 714.1 L1849.7 714.0 L1847.1 714.0 L1844.5 713.9 L1841.8 713.8 L1839.0 713.7 L1836.2 713.6 L1833.3 713.5 L1830.4 713.5 L1827.4 713.4 L1824.3 713.3 L1821.2 713.2 L1818.0 713.1 L1814.8 713.0 L1811.5 712.9 L1808.2 712.8 L1804.9 712.7 L1801.5 712.6 L1798.1 712.5 L1794.6 712.4 L1791.1 712.3 L1787.6 712.2 L1784.1 712.1 L1780.5 711.9 L1776.9 711.8 L1773.3 711.7 L1769.7 711.6 L1766.1 711.5 L1762.4 711.4 L1758.8 711.3 L1755.2 711.2 L1751.5 711.1 L1747.8 711.0 L1744.2 710.9 L1740.5 710.8 L1736.9 710.6 L1733.3 710.5 L1729.7 710.4 L1726.1 710.3 L1722.5 710.2 L1718.9 710.1 L1715.4 710.0 L1711.9 709.9 L1708.4 709.8 L1705.0 709.7 L1701.5 709.6 L1698.2 709.5 L1694.8 709.4 L1691.5 709.3 L1688.2 709.2 L1685.0 709.2 L1681.9 709.1 L1678.8 709.0 L1675.7 708.9 L1672.7 708.8 L1669.8 708.7 L1666.9 708.7 L1664.1 708.6 L1661.3 708.5 L1658.6 708.4 L1656.0 708.4 L1653.5 708.3 L1651.0 708.3 L1648.7 708.2 L1646.4 708.1 L1644.2 708.1 L1642.0 708.0 L1640.0 708.0 L1633.9 707.9 L1628.2 707.8 L1623.0 707.7 L1618.2 707.6 L1613.8 707.6 L1609.7 707.6 L1606.0 707.6 L1602.6 707.6 L1599.4 707.6 L1596.5 707.7 L1593.8 707.7 L1591.3 707.8 L1589.0 707.8 L1586.8 707.9 L1584.7 707.9 L1582.7 708.0 L1580.7 708.0 L1578.8 708.1 L1576.8 708.1 L1574.8 708.1 L1572.8 708.1 L1570.7 708.1 L1568.4 708.1 L1566.0 708.0 L1562.1 707.9 L1558.4 707.8 L1554.9 707.7 L1551.5 707.6 L1548.2 707.4 L1545.1 707.3 L1542.1 707.1 L1539.2 707.0 L1536.4 706.8 L1533.6 706.6 L1531.0 706.3 L1528.3 706.0 L1525.8 705.7 L1523.2 705.4 L1520.7 705.0 L1517.0 704.3 L1513.6 703.5 L1510.3 702.6 L1507.2 701.7 L1504.2 700.7 L1501.4 699.7 L1498.6 698.7 L1495.8 697.7 L1493.1 696.8 L1490.3 696.0 L1486.9 695.3 L1483.6 695.0 L1480.4 694.8 L1477.3 694.6 L1474.2 694.2 L1471.2 693.4 L1468.1 692.1 L1465.0 690.0 L1463.2 688.4 L1461.3 686.5 L1459.4 684.3 L1457.5 682.0 L1455.6 679.4 L1453.7 676.7 L1451.8 674.0 L1449.9 671.2 L1448.1 668.3 L1446.3 665.5 L1444.6 662.8 L1443.0 660.2 L1441.4 657.8 L1440.0 655.5 L1437.9 652.3 L1436.0 649.3 L1434.2 646.5 L1432.5 643.8 L1431.0 641.1 L1429.6 638.5 L1428.3 635.8 L1427.1 633.0 L1426.0 630.0 L1425.1 627.2 L1424.4 624.3 L1423.9 621.3 L1423.4 618.3 L1423.0 615.3 L1422.6 612.2 L1422.3 609.1 L1422.0 606.1 L1421.7 603.0 L1421.4 600.0 L1421.1 597.2 L1420.7 594.6 L1420.5 592.3 L1420.2 589.9 L1419.9 587.5 L1419.7 584.9 L1419.5 581.9 L1419.3 578.6 L1419.2 574.6 L1419.0 570.0 L1418.9 567.7 L1418.9 565.2 L1418.8 562.5 L1418.8 559.7 L1418.8 556.7 L1418.7 553.6 L1418.7 550.4 L1418.7 547.0 L1418.7 543.6 L1418.7 540.2 L1418.6 536.7 L1418.6 533.3 L1418.6 529.8 L1418.6 526.4 L1418.6 523.0 L1418.6 519.6 L1418.6 516.4 L1418.6 513.3 L1418.6 510.3 L1418.6 507.5 L1418.5 504.8 L1418.5 502.3 L1418.5 500.0 L1418.5 495.4 L1418.5 491.6 L1418.5 488.4 L1418.5 485.6 L1418.5 483.1 L1418.5 480.8 L1418.4 478.5 L1418.3 476.0 L1418.1 473.2 L1417.8 470.0 L1417.5 467.3 L1417.1 464.4 L1416.7 461.5 L1416.2 458.4 L1415.7 455.3 L1415.2 452.2 L1414.6 449.0 L1414.0 445.8 L1413.5 442.6 L1412.9 439.4 L1412.4 436.3 L1411.9 433.1 L1411.4 430.0 L1411.0 426.9 L1410.7 423.8 L1410.4 420.7 L1410.1 417.6 L1409.9 414.5 L1409.7 411.4 L1409.4 408.3 L1409.1 405.2 L1408.7 402.1 L1408.2 399.0 L1407.6 396.0 L1406.9 393.0 L1406.0 390.0 L1405.0 387.3 L1404.0 384.5 L1402.8 381.8 L1401.5 379.1 L1400.1 376.4 L1398.7 373.7 L1397.2 371.1 L1395.7 368.4 L1394.1 365.8 L1392.5 363.2 L1390.9 360.6 L1389.2 358.0 L1387.6 355.5 L1386.0 353.0 L1384.3 350.3 L1382.5 347.7 L1380.8 345.1 L1379.0 342.5 L1377.2 339.9 L1375.3 337.3 L1373.5 334.8 L1371.5 332.3 L1369.6 329.8 L1367.5 327.3 L1365.4 324.9 L1363.3 322.4 L1361.0 320.0 L1358.9 317.9 L1356.8 315.7 L1354.5 313.4 L1352.1 311.2 L1349.7 308.9 L1347.2 306.7 L1344.7 304.5 L1342.2 302.3 L1339.8 300.2 L1337.3 298.2 L1334.9 296.3 L1332.6 294.5 L1330.4 292.8 L1328.3 291.3 L1326.4 290.0 L1322.7 287.8 L1319.5 286.5 L1316.7 285.7 L1313.9 285.2 L1311.2 284.8 L1308.3 284.1 L1305.0 283.0 L1302.5 281.9 L1300.0 280.7 L1297.4 279.4 L1294.7 278.0 L1292.0 276.6 L1289.2 275.1 L1286.3 273.7 L1283.3 272.4 L1280.2 271.1 L1277.0 270.0 L1274.3 269.1 L1271.5 268.3 L1268.6 267.5 L1265.7 266.8 L1262.8 266.1 L1259.8 265.4 L1256.7 264.8 L1253.5 264.1 L1250.2 263.5 L1246.9 262.9 L1243.5 262.3 L1240.0 261.7 L1237.8 261.3 L1236.4 260.8 L1235.7 260.3 L1235.4 259.9 L1235.2 259.5 L1235.2 259.0 L1234.9 258.6 L1234.2 258.2 L1233.0 257.8 L1231.1 257.4 L1228.1 257.1 L1224.0 256.7 L1218.5 256.4 L1211.5 256.2 L1202.7 255.9 L1192.0 255.7 L1190.2 255.7 L1188.4 255.6 L1186.5 255.6 L1184.5 255.6 L1182.4 255.6 L1180.3 255.5 L1178.1 255.5 L1175.9 255.5 L1173.6 255.5 L1171.2 255.5 L1168.8 255.4 L1166.3 255.4 L1163.7 255.4 L1161.1 255.4 L1158.4 255.4 L1155.7 255.4 L1152.9 255.4 L1150.1 255.3 L1147.2 255.3 L1144.3 255.3 L1141.3 255.3 L1138.3 255.3 L1135.3 255.3 L1132.2 255.3 L1129.0 255.3 L1125.8 255.3 L1122.6 255.3 L1119.4 255.3 L1116.1 255.2 L1112.7 255.2 L1109.4 255.2 L1106.0 255.2 L1102.6 255.2 L1099.1 255.2 L1095.6 255.2 L1092.1 255.2 L1088.6 255.2 L1085.1 255.2 L1081.5 255.2 L1077.9 255.2 L1074.3 255.2 L1070.7 255.2 L1067.0 255.2 L1063.4 255.2 L1059.7 255.2 L1056.0 255.2 L1052.3 255.2 L1048.6 255.2 L1044.9 255.2 L1041.2 255.3 L1037.5 255.3 L1033.8 255.3 L1030.1 255.3 L1026.4 255.3 L1022.6 255.3 L1018.9 255.3 L1015.2 255.3 L1011.5 255.3 L1007.8 255.3 L1004.1 255.3 L1000.4 255.3 L996.8 255.3 L993.1 255.3 L989.5 255.3 L985.8 255.3 L982.2 255.4 L978.6 255.4 L975.1 255.4 L971.5 255.4 L968.0 255.4 L964.5 255.4 L961.0 255.4 L957.6 255.4 L954.1 255.4 L950.7 255.4 L947.4 255.4 L944.0 255.4 L940.7 255.5 L937.5 255.5 L934.3 255.5 L931.1 255.5 L927.9 255.5 L924.8 255.5 L921.7 255.5 L918.7 255.5 L915.7 255.5 L912.8 255.5 L909.9 255.5 L907.1 255.5 L904.3 255.5 L901.6 255.5 L898.9 255.5 L896.3 255.6 L893.7 255.6 L891.2 255.6 L888.8 255.6 L886.4 255.6 L884.1 255.6 L881.8 255.6 L879.6 255.6 L877.5 255.6 L875.4 255.6 L873.4 255.6 L871.5 255.6 L869.7 255.6 L867.9 255.6 L866.2 255.6 L864.5 255.6 L863.0 255.6Z" fill="url(#gr)"/>
<path d="M916.0 235.3 C940.0 234.9 1013.5 232.9 1060.0 233.0 C1106.5 233.1 1168.3 234.8 1195.0 235.7 C1221.7 236.6 1211.7 237.4 1220.0 238.7 C1228.3 240.0 1238.3 242.0 1245.0 243.5 C1251.7 245.0 1253.3 245.5 1260.0 247.6 C1266.7 249.7 1276.7 252.8 1285.0 256.0 C1293.3 259.2 1302.5 262.8 1310.0 267.0 C1317.5 271.2 1323.3 276.3 1330.0 281.0 C1336.7 285.7 1341.8 288.5 1350.0 295.0 C1358.2 301.5 1370.6 310.3 1379.0 320.0 C1387.4 329.7 1394.3 341.3 1400.5 353.0 C1406.7 364.7 1411.5 377.2 1416.0 390.0 C1420.5 402.8 1424.8 416.7 1427.4 430.0 C1430.0 443.3 1430.7 458.3 1431.6 470.0 C1432.5 481.7 1431.9 483.3 1433.0 500.0 C1434.1 516.7 1435.2 551.7 1438.0 570.0 C1440.8 588.3 1444.6 598.3 1449.6 610.0 C1454.6 621.7 1461.3 631.3 1468.0 640.0 C1474.7 648.7 1481.2 656.5 1490.0 662.0 C1498.8 667.5 1508.3 669.7 1521.0 673.0 C1533.7 676.3 1552.8 679.8 1566.0 682.0 C1579.2 684.2 1577.7 684.8 1600.0 686.0 C1622.3 687.2 1654.7 688.8 1700.0 689.5 C1745.3 690.2 1843.3 690.3 1872.0 690.5" fill="none" stroke="url(#gb)" stroke-width="11"/>
<path d="M887.7 261.4 L1017.7 258.7 L1016.6 207.8 L886.7 210.4Z M901.0 261.2 L1031.0 258.4 L1029.9 207.4 L899.9 210.2Z M914.3 260.9 L1044.3 258.1 L1043.2 207.1 L913.2 209.9Z M927.6 260.6 L1057.6 257.9 L1056.5 206.9 L926.5 209.6Z M940.9 260.2 L1070.8 257.7 L1069.8 206.7 L939.9 209.3Z M954.1 259.9 L1084.1 257.6 L1083.2 206.6 L953.2 208.9Z M967.4 259.6 L1097.3 257.6 L1096.5 206.6 L966.5 208.6Z M980.6 259.3 L1110.6 257.6 L1109.9 206.6 L979.9 208.3Z M993.8 259.0 L1123.8 257.8 L1123.3 206.8 L993.3 208.0Z M1007.0 258.7 L1137.0 258.1 L1136.7 207.1 L1006.7 207.7Z M1020.1 258.5 L1150.1 258.6 L1150.2 207.6 L1020.2 207.5Z M1033.3 258.3 L1163.3 259.2 L1163.6 208.2 L1033.6 207.3Z M1046.5 258.2 L1176.4 259.7 L1177.0 208.7 L1047.0 207.2Z M1059.7 258.3 L1189.7 260.2 L1190.4 209.2 L1060.4 207.3Z M1072.9 258.4 L1202.9 260.7 L1203.8 209.7 L1073.8 207.4Z M1086.1 258.5 L1216.1 261.2 L1217.1 210.2 L1087.2 207.5Z M1099.4 258.7 L1229.3 261.7 L1230.5 210.7 L1100.5 207.7Z M1112.6 258.9 L1242.6 262.3 L1243.9 211.3 L1113.9 207.9Z M1125.8 259.2 L1255.8 262.8 L1257.2 211.8 L1127.3 208.2Z M1139.0 259.5 L1269.0 263.5 L1270.6 212.5 L1140.6 208.5Z M1152.1 259.5 L1282.0 264.7 L1284.1 213.8 L1154.2 208.6Z M1164.1 257.9 L1293.4 270.8 L1298.5 220.0 L1169.1 207.1Z M1175.5 256.1 L1303.3 280.1 L1312.7 230.0 L1184.9 206.0Z M1188.4 258.2 L1315.9 283.5 L1325.8 233.4 L1198.3 208.2Z M1200.8 259.4 L1327.3 289.3 L1339.0 239.7 L1212.6 209.7Z M1212.9 260.3 L1337.5 297.2 L1352.0 248.3 L1227.3 211.4Z M1225.1 262.8 L1348.5 303.7 L1364.6 255.3 L1241.2 214.4Z M1237.3 265.5 L1359.0 311.0 L1376.9 263.2 L1255.1 217.7Z M1249.2 268.2 L1368.6 319.5 L1388.8 272.6 L1269.3 221.3Z M1260.7 269.6 L1374.9 331.6 L1399.3 286.8 L1285.0 224.8Z M1271.9 271.6 L1379.0 345.3 L1407.9 303.3 L1300.8 229.6Z M1282.8 278.8 L1389.1 353.6 L1418.4 311.9 L1312.1 237.1Z M1293.7 286.4 L1399.9 361.3 L1429.3 319.6 L1323.1 244.7Z M1304.5 292.4 L1407.7 371.4 L1438.7 330.9 L1335.5 251.9Z M1315.1 299.1 L1415.8 381.4 L1448.0 341.9 L1347.4 259.6Z M1325.7 304.2 L1419.7 394.1 L1454.9 357.2 L1360.9 267.4Z M1336.2 308.5 L1418.7 408.9 L1458.1 376.5 L1375.6 276.1Z M1345.8 314.7 L1417.7 423.0 L1460.2 394.7 L1388.3 286.5Z M1354.2 323.1 L1418.5 436.1 L1462.8 410.8 L1398.5 297.9Z M1361.8 332.4 L1419.5 448.9 L1465.2 426.3 L1407.5 309.8Z M1368.8 342.2 L1419.7 461.9 L1466.6 441.9 L1415.7 322.3Z M1374.9 352.9 L1420.5 474.6 L1468.3 456.8 L1422.7 335.0Z M1380.3 364.2 L1422.0 487.4 L1470.3 471.0 L1428.6 347.9Z M1385.4 375.6 L1422.8 500.1 L1471.7 485.5 L1434.3 361.0Z M1390.5 386.7 L1421.8 512.9 L1471.3 500.7 L1440.0 374.5Z M1395.6 397.5 L1418.2 525.5 L1468.4 516.6 L1445.8 388.6Z M1399.7 408.7 L1414.2 537.9 L1464.8 532.2 L1450.4 403.0Z M1402.2 421.0 L1412.4 550.6 L1463.2 546.6 L1453.0 417.0Z M1403.8 433.7 L1411.6 563.5 L1462.5 560.4 L1454.7 430.7Z M1405.2 446.5 L1410.6 576.4 L1461.6 574.2 L1456.1 444.4Z M1405.4 460.1 L1412.2 589.9 L1463.1 587.2 L1456.3 457.4Z M1406.1 473.4 L1413.0 603.2 L1463.9 600.5 L1457.0 470.7Z M1406.7 486.7 L1413.8 616.5 L1464.7 613.7 L1457.6 483.9Z M1407.1 500.2 L1415.4 630.0 L1466.3 626.7 L1458.0 497.0Z M1407.3 514.1 L1418.3 643.6 L1469.1 639.3 L1458.2 509.8Z M1407.1 528.6 L1423.6 657.5 L1474.1 651.1 L1457.7 522.1Z M1406.7 543.9 L1432.2 671.4 L1482.2 661.4 L1456.8 533.9Z M1407.0 559.9 L1443.9 684.6 L1492.8 670.1 L1455.9 545.5Z M1408.7 575.8 L1456.6 696.7 L1504.0 677.9 L1456.1 557.0Z M1411.8 591.6 L1470.4 707.6 L1515.9 684.6 L1457.3 568.5Z M1416.1 607.3 L1486.2 716.8 L1529.1 689.4 L1459.1 579.8Z M1422.3 621.7 L1500.7 725.3 L1541.4 694.6 L1463.0 590.9Z M1429.5 635.8 L1516.5 732.4 L1554.4 698.3 L1467.4 601.7Z M1437.6 652.8 L1539.5 733.5 L1571.2 693.6 L1469.3 612.8Z M1448.9 670.2 L1566.0 726.8 L1588.2 680.9 L1471.2 624.3Z M1462.7 681.9 L1586.8 720.6 L1602.0 671.9 L1477.9 633.2Z M1476.3 687.9 L1602.3 719.7 L1614.8 670.3 L1488.7 638.5Z M1489.7 692.5 L1616.8 719.9 L1627.6 670.1 L1500.5 642.6Z M1503.2 696.2 L1630.9 720.5 L1640.4 670.4 L1512.7 646.1Z M1516.6 699.2 L1644.6 721.7 L1653.4 671.4 L1525.4 649.0Z M1530.0 702.2 L1658.4 722.4 L1666.3 672.1 L1537.9 651.8Z M1544.3 706.4 L1673.7 719.2 L1678.7 668.4 L1549.4 655.6Z M1558.4 709.0 L1688.2 716.9 L1691.3 666.0 L1561.5 658.1Z M1572.0 710.1 L1701.8 716.7 L1704.4 665.7 L1574.5 659.2Z M1585.4 711.0 L1715.3 716.8 L1717.5 665.8 L1587.6 660.1Z M1598.8 711.8 L1728.7 716.8 L1730.7 665.8 L1600.8 660.8Z M1612.2 712.5 L1742.2 716.8 L1743.9 665.8 L1613.9 661.5Z M1625.7 713.1 L1755.6 716.8 L1757.0 665.8 L1627.1 662.1Z M1639.1 713.6 L1769.0 716.7 L1770.2 665.7 L1640.3 662.7Z M1652.5 714.1 L1782.5 716.5 L1783.4 665.6 L1653.4 663.1Z M1665.9 714.5 L1795.9 716.4 L1796.6 665.4 L1666.6 663.5Z M1679.3 714.8 L1809.3 716.2 L1809.8 665.2 L1679.8 663.8Z M1692.6 715.0 L1822.6 716.1 L1823.1 665.1 L1693.1 664.0Z M1706.0 715.2 L1836.0 716.1 L1836.3 665.1 L1706.3 664.2Z M1719.3 715.3 L1849.3 716.1 L1849.6 665.1 L1719.6 664.3Z M1732.6 715.4 L1862.6 716.1 L1862.9 665.1 L1732.9 664.4Z M1745.9 715.5 L1875.9 716.1 L1876.2 665.1 L1746.2 664.5Z M1759.2 715.6 L1889.2 716.1 L1889.4 665.1 L1759.4 664.6Z M1772.6 715.7 L1902.6 716.1 L1902.7 665.1 L1772.7 664.7Z M1785.9 715.7 L1915.9 716.1 L1916.0 665.1 L1786.0 664.7Z M1799.2 715.8 L1929.2 716.2 L1929.3 665.2 L1799.3 664.8Z M1812.5 715.8 L1942.5 716.2 L1942.6 665.2 L1812.6 664.8Z M1825.7 715.8 L1955.7 716.3 L1955.9 665.3 L1825.9 664.8Z" fill="none" stroke="#ecec2c" stroke-width="1" opacity="0.95"/>
<g fill="none" stroke="#8a8a8a" stroke-width="2.5">
<path d="M756 196.7L797 196.4"/>
<path d="M1200 194.8L1872 194.3"/>
<path d="M756 275.5L797 275.3M1190 273.5L1872 272.3"/>
<path d="M756 354L1872 352.5"/>
<path d="M1320 470V791M1399.5 490V791M1477.5 490V791"/>
<path d="M1660.0 194.0 C1651.9 194.1 1629.3 193.4 1611.6 194.6 C1593.9 195.8 1571.8 196.5 1553.6 201.0 C1535.4 205.5 1518.3 213.7 1502.4 221.7 C1486.5 229.7 1471.7 239.9 1458.0 249.0 C1444.3 258.1 1431.8 267.0 1420.5 276.3 C1409.2 285.6 1400.4 292.4 1390.0 305.0 C1379.6 317.6 1366.0 339.4 1358.0 352.0 C1350.0 364.6 1346.3 370.6 1342.0 380.4 C1337.7 390.2 1335.0 400.7 1332.0 410.8 C1329.0 420.9 1325.6 430.9 1323.7 441.0 C1321.8 451.1 1321.2 461.7 1320.6 471.5 C1320.0 481.3 1320.1 495.2 1320.0 500.0"/>
<path d="M1660.0 273.5 C1655.3 273.7 1646.9 273.9 1632.0 274.6 C1617.1 275.4 1589.3 274.9 1570.6 278.0 C1551.8 281.1 1536.6 285.1 1519.5 293.3 C1502.4 301.6 1480.0 317.8 1468.0 327.5 C1456.0 337.2 1454.9 341.0 1447.8 351.4 C1440.7 361.8 1431.8 377.7 1425.5 390.0 C1419.2 402.3 1413.9 414.1 1410.0 425.0 C1406.1 435.9 1403.8 444.9 1402.0 455.7 C1400.2 466.5 1399.9 484.3 1399.5 490.0"/>
<path d="M1620.0 353.0 C1615.2 353.0 1603.8 350.6 1591.0 353.2 C1578.2 355.8 1556.1 361.3 1543.0 368.4 C1529.9 375.5 1520.5 387.1 1512.6 395.7 C1504.7 404.3 1500.4 410.9 1495.6 420.0 C1490.8 429.1 1486.8 440.8 1484.0 450.0 C1481.2 459.2 1480.1 466.7 1479.0 475.0 C1477.9 483.3 1477.8 495.8 1477.5 500.0"/>
<path d="M1150.0 353.5 C1156.7 353.5 1176.5 352.4 1190.0 353.5 C1203.5 354.6 1217.2 355.9 1230.7 360.0 C1244.2 364.1 1259.2 370.2 1271.0 378.0 C1282.8 385.8 1294.0 396.2 1301.4 406.7 C1308.8 417.2 1312.6 430.2 1315.6 441.0 C1318.6 451.8 1318.9 461.7 1319.6 471.5 C1320.3 481.3 1319.9 495.2 1320.0 500.0"/>
<path d="M1326.0 800.0 C1326.0 798.5 1325.6 796.6 1326.0 791.0 C1326.4 785.4 1326.6 774.7 1328.5 766.6 C1330.4 758.5 1334.1 749.8 1337.5 742.4 C1340.9 735.0 1344.1 728.6 1349.0 722.0 C1353.9 715.4 1361.5 708.1 1366.8 702.8 C1372.1 697.5 1373.8 696.1 1381.0 690.0 C1388.2 683.9 1393.8 673.9 1410.0 666.0 C1426.2 658.1 1461.3 647.3 1478.0 642.7 C1494.7 638.1 1489.7 639.3 1510.0 638.5 C1530.3 637.7 1560.8 637.8 1600.0 638.0 C1639.2 638.2 1708.5 636.5 1745.0 639.7 C1781.5 642.9 1797.8 650.0 1819.0 657.0 C1840.2 664.0 1863.2 677.8 1872.0 682.0"/>
<path d="M1402.0 800.0 C1402.3 798.5 1401.8 795.7 1404.0 791.0 C1406.2 786.3 1409.5 777.5 1415.4 771.7 C1421.3 765.9 1429.0 761.1 1439.6 756.4 C1450.2 751.7 1462.3 746.2 1479.0 743.6 C1495.7 741.0 1519.8 740.9 1540.0 740.5 C1560.2 740.1 1565.0 740.4 1600.0 741.0 C1635.0 741.6 1713.3 740.8 1750.0 744.0 C1786.7 747.2 1801.7 752.2 1820.0 760.0 C1838.3 767.8 1853.3 785.8 1860.0 791.0"/>
</g>
<rect x="1179" y="199" width="13" height="74" fill="#808080"/>
<polygon points="1631,273.5 1644,273.5 1644,352 1631,352" fill="#808080"/>
<polygon points="1323.7,481.6 1398.6,481 1398.6,493.8 1323.7,494.4" fill="#808080"/>
<polygon points="1410,226.8 1435.8,233.6 1410,241.5" fill="#555555"/>
<polygon points="1522.9,226 1549,233.6 1523,241.5" fill="#555555"/>
<polygon points="1532,242 1558.7,246.6 1534.8,257.5" fill="#4e5262"/>
<polygon points="1440,296.8 1465.9,289.2 1451,308.7" fill="#4e5262"/>
<polygon points="1499,313.1 1524.6,305.3 1524.6,320.6" fill="#555555"/>
<polygon points="1521,347.3 1534.8,324 1546,336" fill="#4c5a5a"/>
<polygon points="1611.6,313.8 1631,307.7 1631,320" fill="#5a6666"/>
<polygon points="1271,314.3 1299,305.7 1296.6,320.9" fill="#555555"/>
<polygon points="1251,329.5 1277.4,324.4 1268.8,341.1" fill="#4c5a5a"/>
<polygon points="1322,378.4 1346,391.6 1334,400.7" fill="#4c5a5a"/>
<polygon points="1352,481 1354.5,462 1362,481" fill="#4c5a5a"/>
<polygon points="1357,481 1365.5,462 1366,481" fill="#4e5262"/>
<polygon points="1401.3,722.7 1428,718 1406.7,734.7" fill="#4e5262"/>
<polygon points="1368,791 1375.8,782 1375,791" fill="#4e5262"/>
<polygon points="1192.3,229 1210.3,236.5 1192.3,242.2" fill="#a0a8a8" fill-opacity="0.35"/>
<polygon points="1287.2,245.1 1282.1,256.5 1305.5,262.8" fill="#a0a8a8" fill-opacity="0.3"/>
<polygon points="1298,234 1307,235 1300,242" fill="#a0a8a8" fill-opacity="0.3"/>
<polygon points="1362.6,300.7 1381,311 1370,315" fill="#a0a8a8" fill-opacity="0.3"/>
<polygon points="1387,309 1405,305 1405,319" fill="#a0a8a8" fill-opacity="0.3"/>
<polygon points="1386,459 1394,438 1398,463" fill="#a0a8a8" fill-opacity="0.3"/>
<polygon points="1431.7,549.5 1445.6,549.5 1441,575" fill="#a0a8a8" fill-opacity="0.35"/>
<polygon points="1442.9,621.8 1465,622 1463,637" fill="#a0a8a8" fill-opacity="0.35"/>
<polygon points="1485.8,673 1511.6,687 1486,699" fill="#a0a8a8" fill-opacity="0.35"/>
<polygon points="1462,391 1475,398 1467,412" fill="#a0a8a8" fill-opacity="0.3"/>
<polygon points="1499.5,590.7 1566,598 1568,791 1500,791" fill="#434b43" opacity="0.5"/>
<g><path d="M1064 205.8L1150 205.8Q1178 207 1178.5 231Q1178 255 1150 256.2L1064 256.2Q1050.5 255 1050.5 231Q1050.5 207 1064 205.8Z" fill="#ffffff" fill-opacity="0.36" stroke="#d0d0d0" stroke-opacity="0.6" stroke-width="1"/><path d="M1068 209L1148 209L1148 214L1068 214Z M1068 248L1148 248L1148 253L1068 253Z" fill="#000" fill-opacity="0.18"/><path d="M1122 212Q1140 212 1143 231Q1140 250 1122 250Z" fill="#000" fill-opacity="0.12"/><path d="M1066 213Q1058 231 1066 249L1072 249Q1068 231 1072 213Z" fill="#000" fill-opacity="0.1"/></g>
<circle cx="1362" cy="173" r="2.5" fill="#0d2a0d"/>
<circle cx="1373" cy="173" r="2.5" fill="#2a2a0d"/>
<circle cx="1384" cy="173" r="2.5" fill="#2a0d0d"/>
<circle cx="1625" cy="228" r="2.5" fill="#0d2a0d"/>
<circle cx="1625" cy="238" r="2.5" fill="#2a2a0d"/>
<circle cx="1625" cy="248" r="2.5" fill="#2a0d0d"/>
<circle cx="1181" cy="295" r="2.5" fill="#2a0d0d"/>
<circle cx="1181" cy="305" r="2.5" fill="#2a2a0d"/>
<circle cx="1181" cy="316" r="2.5" fill="#0d2a0d"/>
</svg>
</div>
</body></html>
